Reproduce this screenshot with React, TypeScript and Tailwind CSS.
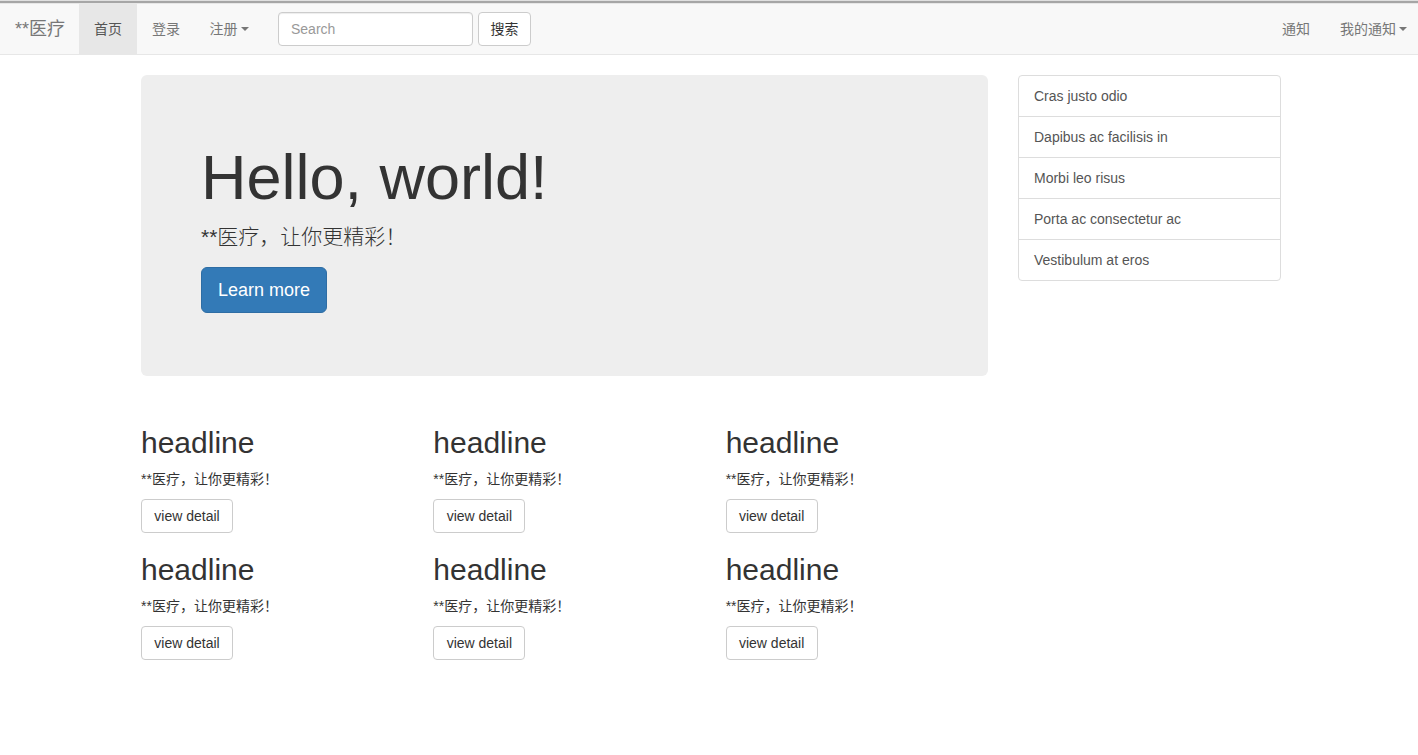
import React from 'react';

const font = "font-['Liberation_Sans','Noto_Sans_CJK_SC',sans-serif]";

const Caret = () => (
  <span className="ml-[3px] inline-block h-0 w-0 border-x-[4px] border-t-[4px] border-x-transparent border-t-current align-middle" />
);

const NavLink: React.FC<{ label: string; width: string; active?: boolean; caret?: boolean }> = ({
  label,
  width,
  active,
  caret,
}) => (
  <a
    className={
      'flex h-[50px] items-center justify-center text-[14px] ' +
      width +
      (active ? ' bg-[#e7e7e7] text-[#555]' : ' text-[#777]')
    }
  >
    {label}
    {caret && <Caret />}
  </a>
);

const listItems = [
  'Cras justo odio',
  'Dapibus ac facilisis in',
  'Morbi leo risus',
  'Porta ac consectetur ac',
  'Vestibulum at eros',
];

const Card = () => (
  <div className="pt-[20px]">
    <h2 className="mb-[10px] text-[30px] leading-[33px] text-[#333]">headline</h2>
    <p className="mb-[10px] text-[14px] leading-[20px] text-[#333]">**医疗，让你更精彩！</p>
    <button className="h-[34px] w-[92px] rounded-[4px] border border-[#ccc] bg-white text-[14px] text-[#333]">
      view detail
    </button>
  </div>
);

export default function App() {
  return (
    <div className={`${font} min-h-[755px] bg-white text-[#333]`}>
      <div className="h-[1px] bg-[#e0e0e0]" />
      <div className="h-[2px] bg-[#a6a6a6]" />

      {/* navbar */}
      <nav className="flex h-[52px] items-stretch border-y border-[#e7e7e7] bg-[#f8f8f8]">
        <a className="flex h-[50px] w-[79px] items-center pl-[15px] text-[18px] text-[#777]">**医疗</a>
        <NavLink label="首页" width="w-[58px]" active />
        <NavLink label="登录" width="w-[58px]" />
        <NavLink label="注册" width="w-[68px]" caret />
        <div className="flex items-start gap-[5px] px-[15px] pt-[8px]">
          <input
            placeholder="Search"
            className="h-[34px] w-[195px] rounded-[4px] border border-[#ccc] bg-white px-[12px] text-[14px] text-[#555] placeholder:text-[#999] shadow-[inset_0_1px_1px_rgba(0,0,0,0.075)] outline-none"
          />
          <button className="h-[34px] w-[53px] rounded-[4px] border border-[#ccc] bg-white text-[14px] text-[#333]">
            搜索
          </button>
        </div>
        <div className="ml-auto flex">
          <NavLink label="通知" width="w-[58px]" />
          <a className="flex h-[50px] items-center pl-[15px] pr-[11px] text-[14px] text-[#777]">
            我的通知
            <Caret />
          </a>
        </div>
      </nav>

      {/* content */}
      <div className="ml-[141px] mt-[20px] flex w-[1140px] items-start gap-[30px]">
        <div className="w-[847px]">
          <div className="rounded-[6px] bg-[#eee] px-[60px] py-[48px]">
            <h1 className="mb-[10px] mt-[20px] text-[63px] leading-[69px] text-[#333]">Hello, world!</h1>
            <p className="mb-[15px] text-[21px] font-light leading-[30px] text-[#333]">**医疗，让你更精彩！</p>
            <div className="mb-[15px]">
              <button className="h-[46px] w-[126px] rounded-[6px] border border-[#2e6da4] bg-[#337ab7] text-[18px] text-white">
                Learn more
              </button>
            </div>
          </div>

          <div className="mt-[30px] grid w-[877px] grid-cols-3">
            {Array.from({ length: 6 }).map((_, i) => (
              <Card key={i} />
            ))}
          </div>
        </div>

        <div className="w-[263px] rounded-[4px] border border-[#ddd]">
          {listItems.map((t, i) => (
            <div
              key={t}
              className={
                'px-[15px] py-[10px] text-[14px] leading-[20px] text-[#555] ' +
                (i > 0 ? 'border-t border-[#ddd]' : '')
              }
            >
              {t}
            </div>
          ))}
        </div>
      </div>
    </div>
  );
}
